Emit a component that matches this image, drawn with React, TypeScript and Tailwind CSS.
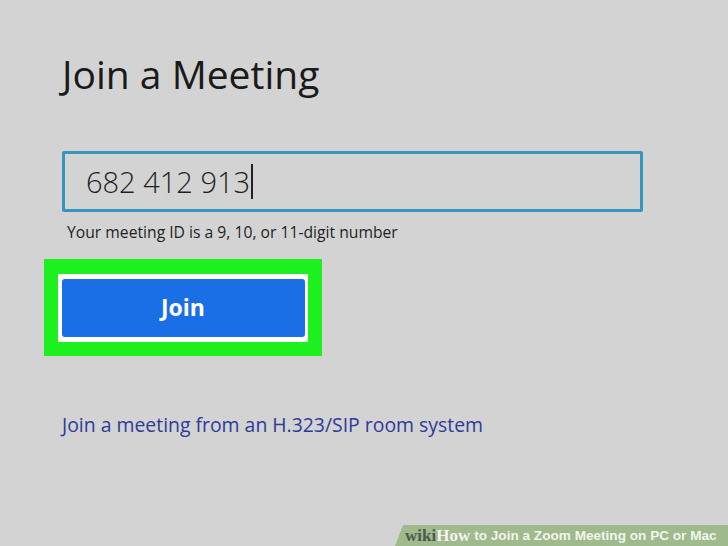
import React from "react";

const Banner = () => {
  return (
    <div className="absolute bottom-0 right-0 h-[21px] w-[333px] bg-[#9fba8c] flex items-center pl-[10px] [clip-path:polygon(8px_0,100%_0,100%_100%,0_100%)]">
      <span className="font-['Liberation_Serif',serif] font-bold text-[17px] text-[#4c5a48] leading-none">wiki</span>
      <span className="font-['Liberation_Serif',serif] font-bold text-[17px] text-[#f2f5ee] leading-none">How</span>
      <span className="font-['Liberation_Sans',sans-serif] font-bold text-[13.6px] text-[#f2f5ee] leading-none ml-[4px] whitespace-nowrap">
        to Join a Zoom Meeting on PC or Mac
      </span>
    </div>
  );
};

export default function App() {
  return (
    <div className="relative w-[728px] h-[546px] overflow-hidden bg-[#d3d3d3] font-['Open_Sans',sans-serif]">
      <div className="flex flex-col pl-[62px] pt-[48px]">
        <h1 className="text-[39px] leading-[52px] text-[#1a1a1a] font-normal">Join a Meeting</h1>

        <div className="mt-[51px] w-[581px] h-[61px] border-[3px] border-[#3596bd] rounded-[2px] flex items-center pl-[21px]">
          <span className="text-[29px] font-light text-[#1f1f1f] leading-none">682 412 913</span>
          <span className="w-[1.5px] h-[35px] bg-[#222] ml-[1px]"></span>
        </div>

        <p className="mt-[10px] ml-[5px] text-[15.7px] leading-[20px] text-[#1f1f1f]">
          Your meeting ID is a 9, 10, or 11-digit number
        </p>

        <div className="-ml-[18px] mt-[17px] w-[278px] h-[97px] bg-[#1ef01f] flex items-center justify-center">
          <div className="w-[250px] h-[68px] bg-white flex items-center justify-center">
            <button className="w-[243px] h-[58px] bg-[#1a6fe6] rounded-[3px] text-white font-bold text-[23px]">
              Join
            </button>
          </div>
        </div>

        <a className="mt-[55px] text-[19.4px] leading-[28px] text-[#2e3b98]">
          Join a meeting from an H.323/SIP room system
        </a>
      </div>
      <Banner />
    </div>
  );
}
